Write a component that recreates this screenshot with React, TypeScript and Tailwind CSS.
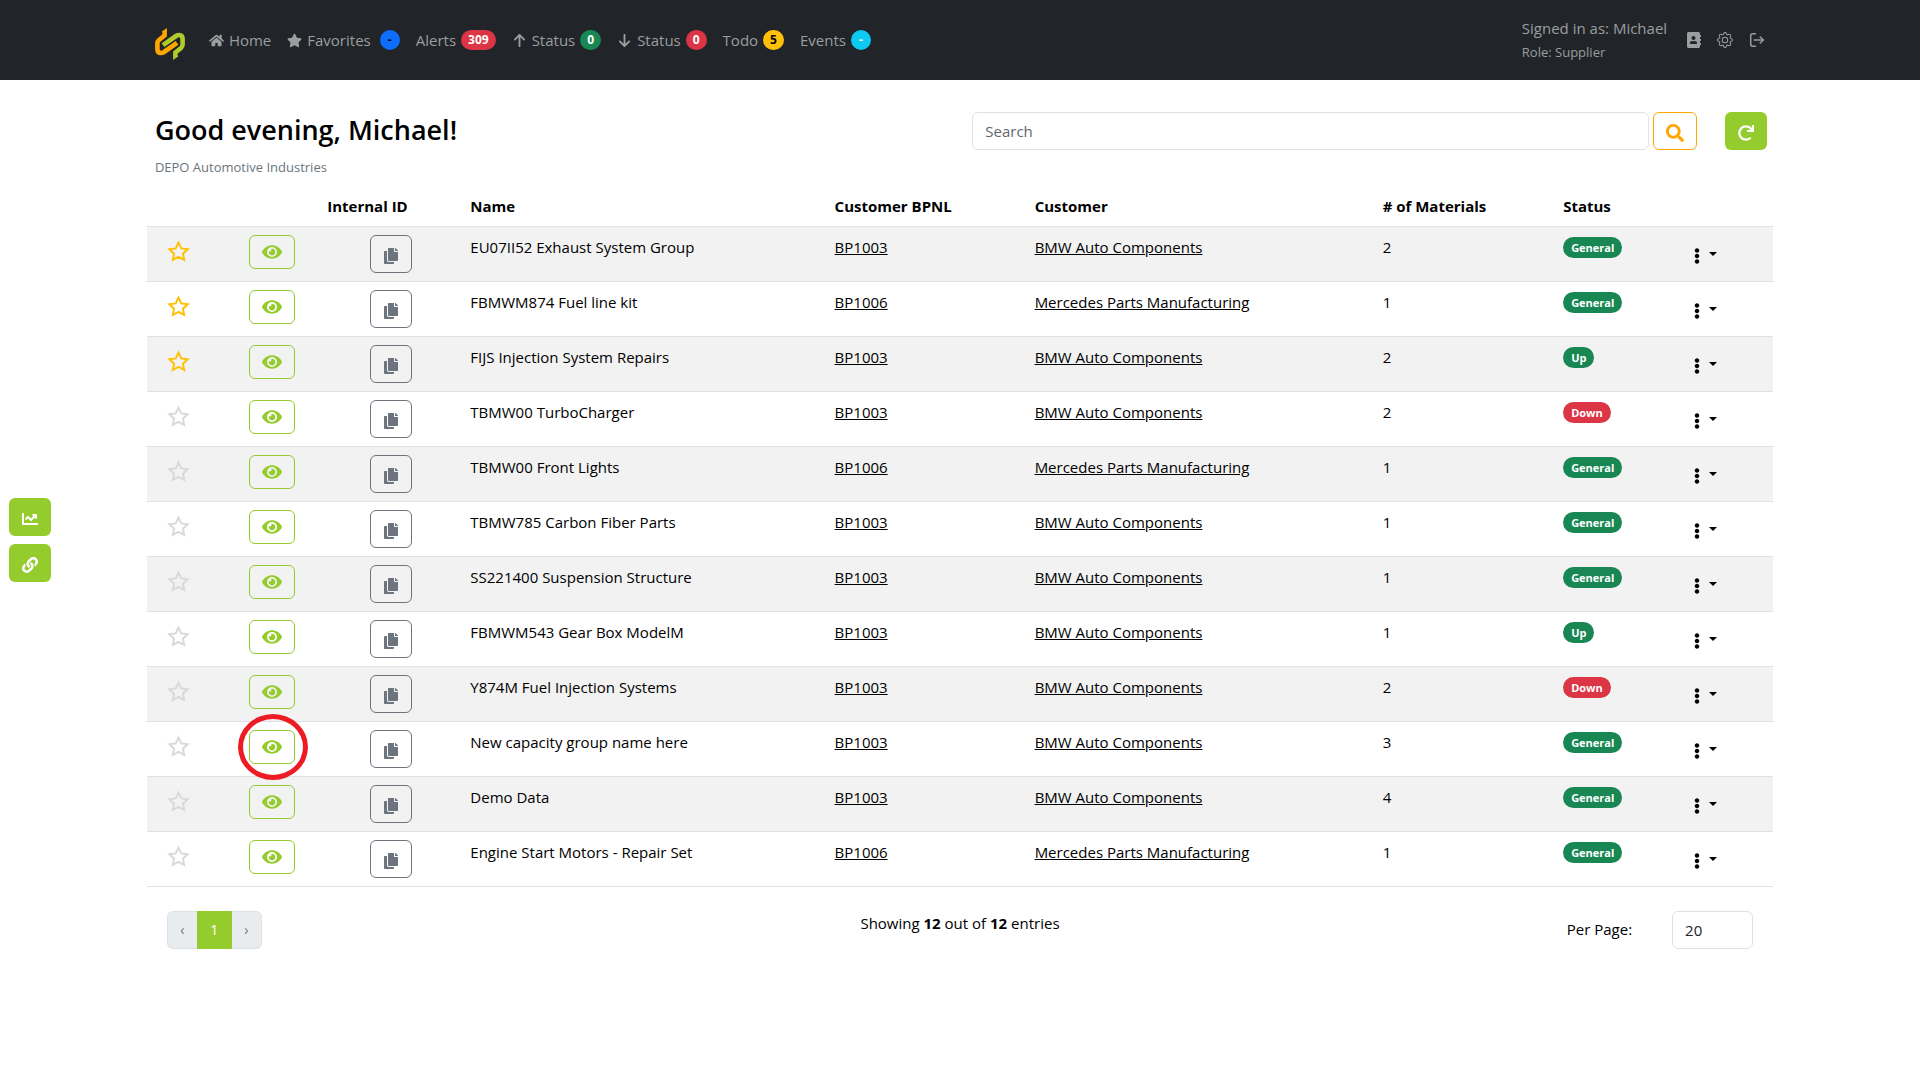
import React from "react";
import {
  FaAddressBook,
  FaChartLine,
  FaCopy,
  FaEllipsisV,
  FaEye,
  FaHome,
  FaLink,
  FaRedo,
  FaSearch,
  FaStar,
} from "react-icons/fa";
import { FaArrowDown, FaArrowUp } from "react-icons/fa6";
import { BsGear } from "react-icons/bs";

type Status = "General" | "Up" | "Down";

interface Group {
  name: string;
  bpnl: string;
  customer: string;
  materials: number;
  status: Status;
  favorite?: boolean;
  marked?: boolean;
}

const BMW = { bpnl: "BP1003", customer: "BMW Auto Components" };
const MERCEDES = { bpnl: "BP1006", customer: "Mercedes Parts Manufacturing" };

const groups: Group[] = [
  { name: "EU07II52 Exhaust System Group", ...BMW, materials: 2, status: "General", favorite: true },
  { name: "FBMWM874 Fuel line kit", ...MERCEDES, materials: 1, status: "General", favorite: true },
  { name: "FIJS Injection System Repairs", ...BMW, materials: 2, status: "Up", favorite: true },
  { name: "TBMW00 TurboCharger", ...BMW, materials: 2, status: "Down" },
  { name: "TBMW00 Front Lights", ...MERCEDES, materials: 1, status: "General" },
  { name: "TBMW785 Carbon Fiber Parts", ...BMW, materials: 1, status: "General" },
  { name: "SS221400 Suspension Structure", ...BMW, materials: 1, status: "General" },
  { name: "FBMWM543 Gear Box ModelM", ...BMW, materials: 1, status: "Up" },
  { name: "Y874M Fuel Injection Systems", ...BMW, materials: 2, status: "Down" },
  { name: "New capacity group name here", ...BMW, materials: 3, status: "General", marked: true },
  { name: "Demo Data", ...BMW, materials: 4, status: "General" },
  { name: "Engine Start Motors - Repair Set", ...MERCEDES, materials: 1, status: "General" },
];

function Logo() {
  const half = "M9.6 3V7.5L4 12Q2.4 13.4 2.4 15.5V21Q2.4 25 6 25Q7.5 25 9 24L22 14.8";
  const tip = "M11.9 0L7.3 3.2V4H11.9Z";
  return (
    <svg viewBox="0 0 30 32" className="h-8 w-[30px]" fill="none" strokeWidth="4.6" aria-hidden="true">
      <path d={half} stroke="#ffa500" />
      <path d={tip} fill="#ffa500" />
      <g transform="rotate(180 15 16)">
        <path d={half} stroke="#b0cb2b" />
        <path d={tip} fill="#b0cb2b" />
      </g>
    </svg>
  );
}

function LogoutIcon() {
  return (
    <svg viewBox="0 0 16 16" className="size-4" fill="none" stroke="currentColor" strokeLinecap="round" aria-hidden="true">
      <path d="M6.5 1.8H3.6Q1.7 1.8 1.7 3.7V12.3Q1.7 14.2 3.6 14.2H6.5" strokeWidth="1.5" />
      <path d="M5.3 8H14" strokeWidth="1.3" />
      <path d="M11.2 5 14.4 8 11.2 11" strokeWidth="1.5" strokeLinejoin="round" />
    </svg>
  );
}

function StarOutline() {
  return (
    <svg viewBox="0 0 28 28" className="size-7" fill="none" stroke="currentColor" strokeWidth="2" aria-hidden="true">
      <path d="M14.5 4.6 17.26 10.4 23.63 11.23 18.97 15.65 20.14 21.97 14.5 18.9 8.86 21.97 10.03 15.65 5.37 11.23 11.74 10.4Z" />
    </svg>
  );
}

interface NavItem {
  label: string;
  icon?: React.ReactNode;
  badge?: string;
  badgeClass?: string;
}

const navItems: NavItem[] = [
  { label: "Home", icon: <FaHome /> },
  { label: "Favorites", icon: <FaStar />, badge: "-", badgeClass: "bg-[#0d6efd] text-black ml-1" },
  { label: "Alerts", badge: "309", badgeClass: "bg-[#dc3545] text-white" },
  { label: "Status", icon: <FaArrowUp />, badge: "0", badgeClass: "bg-[#198754] text-white" },
  { label: "Status", icon: <FaArrowDown />, badge: "0", badgeClass: "bg-[#dc3545] text-white" },
  { label: "Todo", badge: "5", badgeClass: "bg-[#ffc107] text-black" },
  { label: "Events", badge: "-", badgeClass: "bg-[#0dcaf0] text-white" },
];

function Header() {
  return (
    <header className="bg-[#212529] text-[#9b9d9e]">
      <div className="mx-auto flex h-20 w-[84.7%] items-center justify-between px-2">
        <nav className="flex items-center gap-4">
          <a href="#" aria-label="Start page" className="mt-2 mr-2">
            <Logo />
          </a>
          {navItems.map((item, i) => (
            <a key={i} href="#" className="flex items-center gap-[5px] whitespace-nowrap">
              {item.icon}
              <span>{item.label}</span>
              {item.badge && (
                <span
                  className={`flex h-5 min-w-5 items-center justify-center rounded-full px-[7px] text-xs font-bold ${item.badgeClass}`}
                >
                  {item.badge}
                </span>
              )}
            </a>
          ))}
        </nav>
        <div className="flex items-center gap-4">
          <div className="pr-1 whitespace-nowrap">
            <div className="leading-6">Signed in as: Michael</div>
            <div className="text-[13px] leading-6">Role: Supplier</div>
          </div>
          <button type="button" aria-label="Contacts">
            <FaAddressBook className="h-4 w-[14px]" />
          </button>
          <button type="button" aria-label="Settings">
            <BsGear className="size-4" />
          </button>
          <button type="button" aria-label="Sign out">
            <LogoutIcon />
          </button>
        </div>
      </div>
    </header>
  );
}

function StatusBadge({ status }: { status: Status }) {
  const color = status === "Down" ? "bg-[#dc3545]" : "bg-[#198754]";
  return (
    <span className={`inline-block rounded-full px-2 text-[11px] leading-[21px] font-bold text-white ${color}`}>
      {status}
    </span>
  );
}

function GroupRow({ group }: { group: Group }) {
  return (
    <tr className="h-[55px] border-y border-[#dee2e6] align-top odd:bg-[#f2f2f2]">
      <td className="px-[17px] pt-[11px]">
        <button
          type="button"
          aria-label={`Favorite ${group.name}`}
          className={`block ${group.favorite ? "text-[#ffc107]" : "text-[#d9d9d9]"}`}
        >
          <StarOutline />
        </button>
      </td>
      <td className="px-2 pt-2">
        <div className="relative w-[46px]">
          <button
            type="button"
            aria-label={`View ${group.name}`}
            className="flex h-[34px] w-[46px] items-center justify-center rounded-md border border-[#94cb2d] text-[#94cb2d]"
          >
            <FaEye className="h-[18px] w-5" />
          </button>
          {group.marked && (
            <span className="pointer-events-none absolute -inset-y-4 -right-[13px] -left-[11px] z-10 rounded-[50%] border-[5px] border-[#ed1c24]" />
          )}
        </div>
      </td>
      <td className="pt-2">
        <button
          type="button"
          aria-label={`Copy ID of ${group.name}`}
          className="mx-auto flex h-[38px] w-[42px] items-center justify-center rounded-md border border-[#6c757d] pt-1 text-[#6c757d]"
        >
          <FaCopy className="h-4 w-[14px]" />
        </button>
      </td>
      <td className="px-2 pt-2">{group.name}</td>
      <td className="px-2 pt-2">
        <a href="#" className="underline">
          {group.bpnl}
        </a>
      </td>
      <td className="px-2 pt-2">
        <a href="#" className="underline">
          {group.customer}
        </a>
      </td>
      <td className="px-2 pt-2">{group.materials}</td>
      <td className="px-2 pt-[7px]">
        <StatusBadge status={group.status} />
      </td>
      <td className="px-[13px] pt-[21px]">
        <button type="button" aria-label={`Actions for ${group.name}`} className="flex items-start gap-[7px]">
          <FaEllipsisV className="h-4 w-[10px]" />
          <span className="mt-1 border-x-4 border-t-4 border-x-transparent border-t-black" />
        </button>
      </td>
    </tr>
  );
}

function GroupTable() {
  return (
    <table className="w-full table-fixed border-collapse text-left leading-6">
      <colgroup>
        <col className="w-[5.8%]" />
        <col className="w-[4.8%]" />
        <col className="w-[8.8%]" />
        <col className="w-[22.4%]" />
        <col className="w-[12.3%]" />
        <col className="w-[21.4%]" />
        <col className="w-[11.1%]" />
        <col className="w-[7.6%]" />
        <col className="w-[5.8%]" />
      </colgroup>
      <thead>
        <tr className="h-10">
          <th />
          <th />
          <th className="px-2">Internal ID</th>
          <th className="px-2">Name</th>
          <th className="px-2">Customer BPNL</th>
          <th className="px-2">Customer</th>
          <th className="px-2"># of Materials</th>
          <th className="px-2">Status</th>
          <th />
        </tr>
      </thead>
      <tbody>
        {groups.map((group) => (
          <GroupRow key={group.name} group={group} />
        ))}
      </tbody>
    </table>
  );
}

function SideButtons() {
  const button = "flex h-[38px] w-[42px] items-center justify-center rounded-md bg-[#94cb2d] text-white";
  return (
    <div className="fixed inset-y-0 left-[9px] flex flex-col justify-center gap-2">
      <button type="button" aria-label="Charts" className={button}>
        <FaChartLine className="mt-1 size-4" />
      </button>
      <button type="button" aria-label="Links" className={button}>
        <FaLink className="mt-1 size-4" />
      </button>
    </div>
  );
}

export default function App() {
  return (
    <div className="min-h-screen bg-white font-['Open_Sans',sans-serif] text-[15px] text-black">
      <Header />
      <SideButtons />
      <main className="mx-auto w-[84.7%]">
        <div className="flex items-start justify-between pt-8 pr-[6px] pl-2">
          <div>
            <h1 className="text-[27px] leading-9 font-semibold">Good evening, Michael!</h1>
            <p className="mt-[7px] text-[13px] leading-6 text-[#6c757d]">DEPO Automotive Industries</p>
          </div>
          <div className="flex w-[49.3%]">
            <input
              type="search"
              aria-label="Search"
              placeholder="Search"
              className="h-[38px] min-w-0 flex-1 rounded-md border border-[#dee2e6] px-3 placeholder:text-[#5f666c]"
            />
            <button
              type="button"
              aria-label="Run search"
              className="ml-1 flex h-[38px] w-11 items-center justify-center rounded-md border border-[#ffa500] text-[#ffa500]"
            >
              <FaSearch className="mt-1 size-[18px]" />
            </button>
            <button
              type="button"
              aria-label="Refresh"
              className="ml-7 flex h-[38px] w-[42px] items-center justify-center rounded-md bg-[#94cb2d] text-white"
            >
              <FaRedo className="mt-1 size-4" />
            </button>
          </div>
        </div>
        <div className="mt-[7px]">
          <GroupTable />
        </div>
        <footer className="grid grid-cols-3 items-start px-5 pt-6">
          <div className="flex h-[38px] text-[#6c757d]">
            <button
              type="button"
              aria-label="Previous page"
              className="w-[30px] rounded-l-md border border-r-0 border-[#dee2e6] bg-[#e9ecef] text-sm"
            >
              ‹
            </button>
            <button type="button" className="w-[35px] bg-[#94cb2d] text-white">
              1
            </button>
            <button
              type="button"
              aria-label="Next page"
              className="w-[30px] rounded-r-md border border-l-0 border-[#dee2e6] bg-[#e9ecef] text-sm"
            >
              ›
            </button>
          </div>
          <p className="text-center leading-6">
            Showing <b>12</b> out of <b>12</b> entries
          </p>
          <div className="flex items-center justify-end gap-10">
            <label htmlFor="per-page">Per Page:</label>
            <input
              id="per-page"
              type="text"
              inputMode="numeric"
              defaultValue="20"
              className="h-[38px] w-[81px] rounded-md border border-[#dee2e6] px-3 text-[#212529]"
            />
          </div>
        </footer>
      </main>
    </div>
  );
}
